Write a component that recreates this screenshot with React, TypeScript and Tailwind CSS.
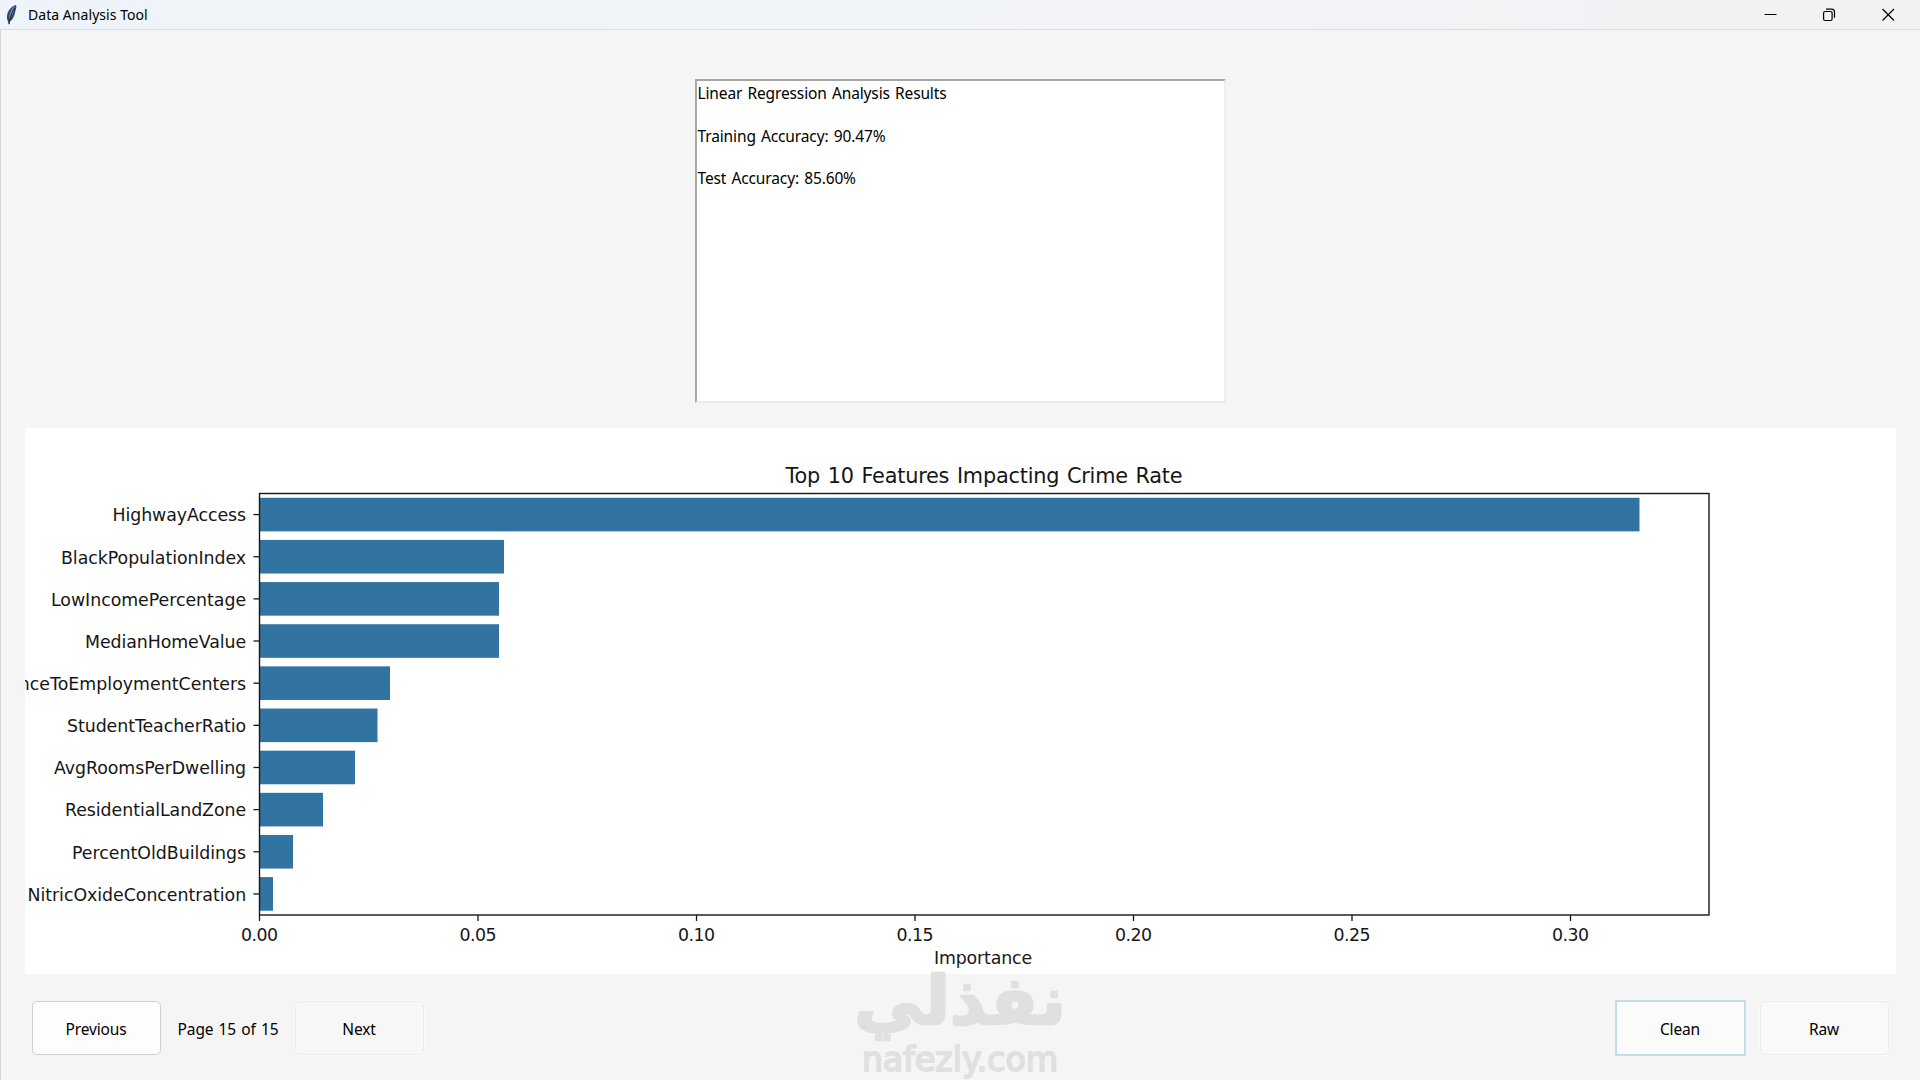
import { clsx } from "clsx";

type Feature = { name: string; bar: number; label: number };

// bar: right end of the bar inside the figure, label: width of the tick label
const features: Feature[] = [
  { name: "HighwayAccess", bar: 1614.5, label: 133.5 },
  { name: "BlackPopulationIndex", bar: 479, label: 185 },
  { name: "LowIncomePercentage", bar: 474, label: 195 },
  { name: "MedianHomeValue", bar: 474, label: 161 },
  { name: "DistanceToEmploymentCenters", bar: 365, label: 272 },
  { name: "StudentTeacherRatio", bar: 352.5, label: 179 },
  { name: "AvgRoomsPerDwelling", bar: 330, label: 192 },
  { name: "ResidentialLandZone", bar: 298, label: 181 },
  { name: "PercentOldBuildings", bar: 268, label: 174 },
  { name: "NitricOxideConcentration", bar: 248, label: 218.5 },
];

const ticks = ["0.00", "0.05", "0.10", "0.15", "0.20", "0.25", "0.30"];

const plot = { left: 234.5, top: 65.5, right: 1684, bottom: 487 };
const rowHeight = (plot.bottom - plot.top) / features.length;
const tickStep = 218.5;

function FeatherIcon() {
  return (
    <svg width="14" height="22" viewBox="0 0 14 22" className="shrink-0">
      <path d="M11 1C7 2 4 5 2.6 9c-.9 3-1 6 .4 8.500L4 21l.8-3.500C8 16 9.700 11 10.300 7.500 10.800 5 12 3 11 1Z" fill="#34465f" />
      <path d="M9.800 2C7 3.500 5.300 7 4.300 11.500L4 15c3-2 4.200-5.500 4.700-8.500Z" fill="#668fca" />
      <path d="M9.500 4C7 8 5 13 4 20" fill="none" stroke="#182231" strokeWidth="1" />
    </svg>
  );
}

function TitleBar() {
  return (
    <header className="flex h-[30px] shrink-0 items-center justify-between border-b border-[#d9dde0] bg-linear-to-r from-[#eff4fa] via-[#f1f4f9] to-[#f2f2f3] pr-[25px] pl-[5px]">
      <div className="flex items-center gap-[9px]">
        <FeatherIcon />
        <h1 className="text-[14px] leading-none tracking-[0.050px]">Data Analysis Tool</h1>
      </div>
      <div className="flex items-center gap-[46px]">
        <svg width="13" height="14" viewBox="0 0 13 14" stroke="black" fill="none">
          <path d="M0.500 6.500h12" />
        </svg>
        <svg width="13" height="14" viewBox="0 0 13 14" stroke="black" fill="none" strokeWidth="1.200">
          <rect x="0.600" y="3.500" width="8.500" height="9" rx="1.500" />
          <path d="M3 1.200h5.500a3 3 0 0 1 3 3v5.500" />
        </svg>
        <svg width="13" height="14" viewBox="0 0 13 14" stroke="black" fill="none" strokeWidth="1.200">
          <path d="m0.500 1 11.500 11.500M12 1l-11.500 11.500" />
        </svg>
      </div>
    </header>
  );
}

function Results() {
  return (
    <section className="mr-px h-[324px] w-[531px] shrink-0 self-center border-2 border-t-[#a6a6a6] border-r-[#eeeeee] border-b-[#e9e9e9] border-l-[#aaaaaa] bg-white pt-[2px] pl-px">
      <p>Linear Regression Analysis Results</p>
      <p className="mt-[21.300px]">Training Accuracy: 90.47%</p>
      <p className="mt-[21.300px]">Test Accuracy: 85.60%</p>
    </section>
  );
}

function ImportanceChart() {
  return (
    <svg
      width="1871"
      height="546"
      viewBox="0 0 1871 546"
      fill="#161616"
      className="block shrink-0 overflow-hidden bg-white font-['DejaVu_Sans',sans-serif] text-[17.360px]"
    >
      <text x="959" y="55" textAnchor="middle" textLength="397" className="text-[20.830px]">
        Top 10 Features Impacting Crime Rate
      </text>
      {features.map((f, i) => {
        const mid = plot.top + rowHeight * (i + 0.5);
        return (
          <g key={f.name}>
            <rect x={plot.left} y={mid - 16.8} width={f.bar - plot.left} height={33.6} fill="#3274a1" />
            <path d={`M${plot.left - 6} ${mid}H${plot.left}`} stroke="#161616" strokeWidth="1.300" />
            <text x="221" y={mid + 6.8} textAnchor="end" textLength={f.label}>
              {f.name}
            </text>
          </g>
        );
      })}
      {ticks.map((t, i) => (
        <g key={t}>
          <path d={`M${plot.left + i * tickStep} ${plot.bottom}v6`} stroke="#161616" strokeWidth="1.300" />
          <text x={plot.left + i * tickStep} y="513" textAnchor="middle" textLength="37">
            {t}
          </text>
        </g>
      ))}
      <rect
        x={plot.left}
        y={plot.top}
        width={plot.right - plot.left}
        height={plot.bottom - plot.top}
        fill="none"
        stroke="#161616"
        strokeWidth="1.400"
      />
      <text x="958" y="536" textAnchor="middle" textLength="98">
        Importance
      </text>
    </svg>
  );
}

function Button({ label, className }: { label: string; className?: string }) {
  return (
    <button
      type="button"
      className={clsx("flex h-[54px] w-[129px] items-center justify-center border pt-[3px] pr-px", className)}
    >
      {label}
    </button>
  );
}

function Watermark() {
  return (
    <svg
      width="230"
      height="116"
      viewBox="0 0 230 116"
      fill="#e0e0e0"
      stroke="#e0e0e0"
      strokeLinejoin="round"
      className="pointer-events-none absolute bottom-0 left-[845px]"
    >
      <text
        x="115"
        y="60"
        textAnchor="middle"
        textLength="212"
        lengthAdjust="spacingAndGlyphs"
        direction="rtl"
        strokeWidth="2.500"
        className="font-['DejaVu_Sans',sans-serif] text-[67px] font-bold"
      >
        نفذلي
      </text>
      <text
        x="115"
        y="107"
        textAnchor="middle"
        textLength="196"
        lengthAdjust="spacingAndGlyphs"
        strokeWidth="1.800"
        className="font-['DejaVu_Sans',sans-serif] text-[33px]"
      >
        nafezly.com
      </text>
    </svg>
  );
}

export default function App() {
  return (
    <div className="relative flex h-screen w-full flex-col overflow-hidden bg-[#f5f5f5] font-['Noto_Sans',sans-serif] text-black">
      <TitleBar />
      <main className="flex min-h-0 flex-1 flex-col border-l border-[#d5d5d5] pt-[49px] pl-6 text-[15.500px] leading-[21.300px] tracking-[-0.130px] [word-spacing:1.300px]">
        <div className="flex w-[1871px] flex-col gap-[25px]">
          <Results />
          <ImportanceChart />
        </div>
        <footer className="mt-[27px] flex w-[1871px] items-center justify-between px-[7px]">
          <div className="flex items-center">
            <Button label="Previous" className="rounded-[5px] border-[#d0d0d0] bg-[#fdfdfd]" />
            <p className="w-[134px] pt-[3px] text-center">Page 15 of 15</p>
            <Button label="Next" className="rounded-[5px] border-[#ececec] bg-[#f7f7f7] ring-1 ring-[#fafafa]" />
          </div>
          <div className="flex items-center gap-[15px]">
            <Button label="Clean" className="border-[#bfdceb] bg-[#fbfbfb] ring-1 ring-[#c5dfec]" />
            <Button label="Raw" className="rounded-[5px] border-[#ebebeb] bg-[#f9f9f9] ring-1 ring-[#fafafa]" />
          </div>
        </footer>
      </main>
      <Watermark />
    </div>
  );
}
